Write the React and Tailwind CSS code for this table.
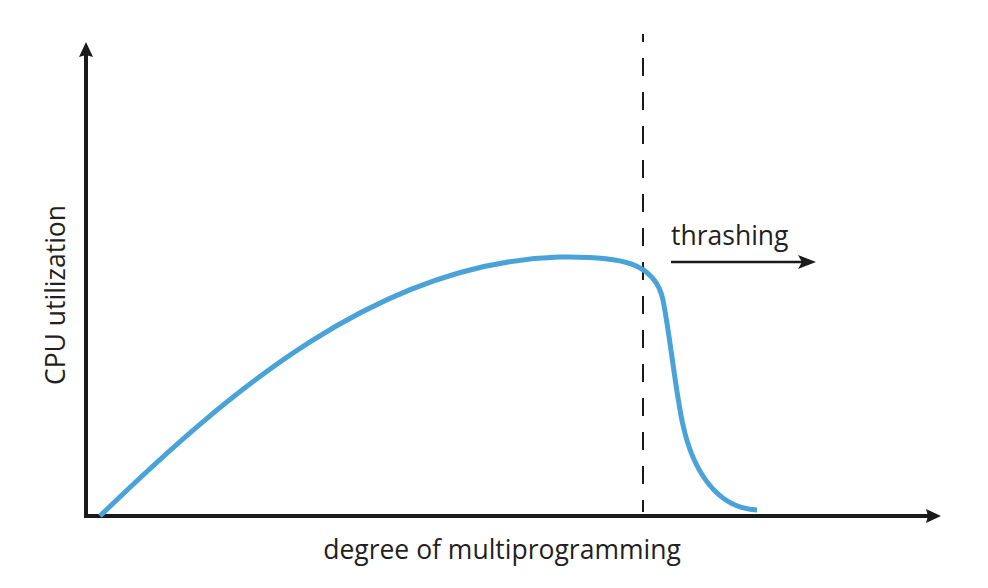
import React from "react";

export default function App() {
    return (
        <div className="w-[988px] h-[588px] bg-white font-['Open_Sans',sans-serif] text-[#1a1a1a]">
            <svg width="988" height="588" viewBox="0 0 988 588">
                {/* axes */}
                <line x1="86" y1="517" x2="86" y2="54" stroke="#1a1a1a" strokeWidth="4" />
                <path d="M86 42 L93 57 L86 55 L79 57 Z" fill="#1a1a1a" />
                <line x1="84" y1="516" x2="928" y2="516" stroke="#1a1a1a" strokeWidth="4" />
                <path d="M941 516 L926 523 L928 516 L926 509 Z" fill="#1a1a1a" />

                {/* thrashing threshold */}
                <line
                    x1="643"
                    y1="34"
                    x2="643"
                    y2="512"
                    stroke="#1a1a1a"
                    strokeWidth="2"
                    strokeDasharray="18 16"
                    strokeDashoffset="10"
                />

                {/* utilization curve */}
                <path
                    d="M100 516 C230 390 380 262 560 257 C620 256 655 262 663 300 C670 335 676 395 683 425 C691 462 712 508 757 510"
                    fill="none"
                    stroke="#4aa3d8"
                    strokeWidth="5"
                />

                {/* thrashing arrow */}
                <line x1="671" y1="262" x2="804" y2="262" stroke="#1a1a1a" strokeWidth="2.5" />
                <path d="M816 262 L798 269 L802 262 L798 255 Z" fill="#1a1a1a" />

                <text x="671" y="245" fontSize="26.5" fill="#231f20">
                    thrashing
                </text>
                <text x="502" y="559" fontSize="26.5" fill="#231f20" textAnchor="middle">
                    degree of multiprogramming
                </text>
                <text
                    x="0"
                    y="0"
                    fontSize="26.5"
                    fill="#231f20"
                    textAnchor="middle"
                    transform="translate(65 295) rotate(-90)"
                >
                    CPU utilization
                </text>
            </svg>
        </div>
    );
}
